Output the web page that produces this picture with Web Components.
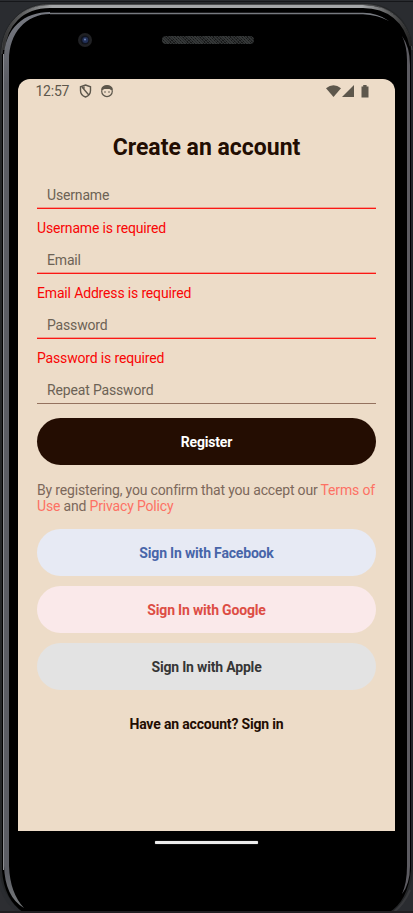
<!DOCTYPE html>
<html lang="en">
<head>
<meta charset="utf-8">
<title>Create an account</title>
<style>
html,body{margin:0;height:100%;overflow:hidden;background:#2a2c30}
body{font-family:Roboto,"Liberation Sans",sans-serif}
</style>
</head>
<body>
<phone-frame>
  <status-bar slot="screen"></status-bar>
  <register-form slot="screen"></register-form>
</phone-frame>
<script>
function define(name, html, setup){
  customElements.define(name, class extends HTMLElement{
    connectedCallback(){
      if(this.shadowRoot) return;
      const root = this.attachShadow({mode:'open'});
      root.innerHTML = html;
      if(setup) setup(this, root);
    }
  });
}

define('phone-frame', `
<style>
:host{display:grid;width:413px;height:913px;overflow:hidden;grid-template:79px 752px 82px / 18px 377px 18px}
svg.case{grid-area:1/1/4/4;width:413px;height:913px;display:block}
.top{grid-area:1/2;display:grid;grid-template-columns:144px 92px 1fr;align-items:center;height:79px}
.camera{width:14px;height:14px;justify-self:start;margin-left:59.5px}
.speaker{height:8px;border-radius:4px;background-color:#262829;background-image:repeating-linear-gradient(45deg,#353838 0 1px,transparent 1px 2px),repeating-linear-gradient(-45deg,#161717 0 1px,transparent 1px 3px)}
.screen{grid-area:2/2;background:#eddcc8;border-radius:12px 12px 0 0;overflow:hidden}
.bottom{grid-area:3/2;display:flex;justify-content:center;align-items:flex-start}
.pill{width:103px;height:3px;border-radius:1px;background:#ededed;margin:10px 1px 0 0;box-shadow:0 0 1px #aaa}
</style>
<svg class="case" viewBox="0 0 413 913">
  <defs>
    <linearGradient id="rim" x1="0" x2="1"><stop offset="0" stop-color="#333"/><stop offset=".12" stop-color="#a4a6a8"/><stop offset=".88" stop-color="#a4a6a8"/><stop offset="1" stop-color="#222"/></linearGradient>
    <linearGradient id="side" x1="0" y1="0" x2="0" y2="1"><stop offset="0" stop-color="#777a82"/><stop offset=".08" stop-color="#5b5d64"/><stop offset=".96" stop-color="#5b5d64"/><stop offset="1" stop-color="#777a7c"/></linearGradient>
  </defs>
  <rect width="413" height="913" fill="#2a2c30"/>
  <rect width="413" height="1" y="1" fill="#16171a"/>
  <path d="M0 913V55C0 25 22 3 50 3H363C395 3 413 25 413 52V865C412 890 405 901 392 913H24Q0 895 0 870Z" fill="#242628"/>
  <path d="M2 870V54C2 27 20 4.500 50 4.500H363C391 4.500 411 23 411 54V870C409 890 402 905 388 913H24Q4 900 2 870Z" fill="#000"/>
  <path d="M2 54C2 27 20 4.500 50 4.500H363C391 4.500 409 23 412 50" fill="none" stroke="#4c4d4f"/>
  <path d="M3.500 50C5 25 22 6.500 50 6.500H363C388 6.500 406 21 411 46" fill="none" stroke="url(#rim)" stroke-width="3"/>
  <path d="M50 12.800H363Q378 13 389 21Q378 15 363 14.200H50Z" fill="#777a80"/>
  <path d="M50 12C24 12 5 28 4 57V866Q5 897 24 908Q10 893 9 866V60C9 33 26 14 50 14Z" fill="url(#side)"/>
  <path d="M3.500 54V870" stroke="#8b8d92" stroke-width="1"/>
  <path d="M402 36Q410 47 410 65V866Q410 884 402 894Q407 883 407 866V60Q407 46 402 36Z" fill="#5c5b61"/>
  <path d="M411.500 55V870" stroke="#25262b"/>
  <path d="M410 890Q404 904 393 913" fill="none" stroke="#38393c" stroke-width="2"/>
  <path d="M0 889Q5 904 18 913H0Z" fill="#2d2e32"/>
  <rect width="413" height="2" y="911" fill="#211e21"/>
</svg>
<div class="top">
  <svg class="camera" viewBox="0 0 14 14"><circle cx="7" cy="7" r="7" fill="#202124"/><circle cx="7" cy="7" r="4.500" fill="#10131d"/><circle cx="7.300" cy="7" r="3" fill="#223057"/><circle cx="7" cy="6.500" r="1" fill="#6c83b4"/></svg>
  <div class="speaker"></div>
</div>
<div class="screen"><slot name="screen"></slot></div>
<div class="bottom"><div class="pill"></div></div>`);

define('status-bar', `
<style>
:host{display:flex;align-items:center;height:24px;padding:0 26px 0 17.5px;box-sizing:border-box;color:#5d574c;font-size:14px;letter-spacing:-.25px;line-height:24px}
time{width:43.5px}
svg{display:block;fill:currentColor}
.gap{flex:1}
</style>
<time>12:57</time>
<svg width="13" height="14" viewBox="0 0 13 14"><path d="M6.500 1L11.500 2.800V6.500C11.500 9.500 9.500 12 6.500 13C3.500 12 1.500 9.500 1.500 6.500V2.800Z" fill="none" stroke="currentColor" stroke-width="1.400"/><path d="M3 3L9.800 11M5 2.500V5.500L8.500 9.500" fill="none" stroke="currentColor" stroke-width="1.300"/></svg>
<svg width="14" height="14" viewBox="0 0 14 14" style="margin-left:8px"><circle cx="7" cy="7.300" r="5.300" fill="none" stroke="currentColor" stroke-width="1.200"/><path d="M1 5.500Q2 1 7 1Q12 1 13 5.500L11 6L9.500 5H4.500L2.500 6Z"/><circle cx="5" cy="8" r=".8"/><circle cx="9" cy="8" r=".8"/></svg>
<span class="gap"></span>
<svg width="15" height="12" viewBox="0 0 15 12"><path d="M0 3.200Q7.500-2.800 15 3.200L7.500 12Z"/></svg>
<svg width="12" height="12" viewBox="0 0 12 12" style="margin-left:1px"><path d="M12 0V12H0Z"/></svg>
<svg width="8" height="13" viewBox="0 0 8 13" style="margin-left:7px"><path d="M2.200 0H5.600V1.500H7.500V12.500H.5V1.500H2.200Z"/></svg>`);

define('text-field', `
<style>
:host{display:block}
.box{box-sizing:border-box;height:31px;border-bottom:1px solid #94725f;padding:0 10px;color:#6c6255;font-size:14px;letter-spacing:-.16px;line-height:35px}
:host([error]) .box{border-bottom-color:#fb1814;box-shadow:0 -1px 0 rgba(255,0,0,.3)}
:host([error]) .box{clip-path:inset(-1px 0 0 0);box-shadow:inset 0 -1px 0 rgba(255,0,0,.3)}
.error{font-size:14px;letter-spacing:-.16px;line-height:16px;height:16px;color:#f90505;margin-top:11px;margin-bottom:1px}
:host(:not([error])) .error{display:none}
</style>
<div class="box"><slot></slot></div><div class="error"></div>`,
(el, root)=>{ root.querySelector('.error').textContent = el.getAttribute('error') || ''; });

define('pill-button', `
<style>
:host{display:block;height:47px;border-radius:23.5px;background:var(--fill);color:var(--ink);text-align:center;font-size:14px;font-weight:700;letter-spacing:-.18px;line-height:48px}
</style><slot></slot>`);

define('register-form', `
<style>
:host{display:flex;flex-direction:column;padding:0 19px}
h1{margin:31px 0 0;height:28px;font-size:23px;line-height:28px;text-align:center;color:#220d02}
.fields{display:flex;flex-direction:column;gap:6px;margin-top:16px}
.primary{margin-top:14px}
p{margin:17px 0 0;font-size:14px;letter-spacing:-.17px;line-height:16px;color:#7c685b;white-space:nowrap}
p span{color:#fd7164}
.social{display:flex;flex-direction:column;gap:10px;margin-top:15px}
.signin{margin-top:26px;text-align:center;font-size:14px;font-weight:700;letter-spacing:-.17px;line-height:16px;color:#220d02}
</style>
<h1>Create an account</h1>
<div class="fields">
<text-field error="Username is required">Username</text-field>
<text-field error="Email Address is required">Email</text-field>
<text-field error="Password is required">Password</text-field>
<text-field>Repeat Password</text-field>
</div>
<pill-button class="primary" style="--fill:#240d02;--ink:#fff">Register</pill-button>
<p>By registering, you confirm that you accept our <span>Terms of<br>Use</span> and <span>Privacy Policy</span></p>
<div class="social">
<pill-button style="--fill:#e7eaf4;--ink:#4765a9">Sign In with Facebook</pill-button>
<pill-button style="--fill:#fae9ea;--ink:#dd4d44">Sign In with Google</pill-button>
<pill-button style="--fill:#e3e3e3;--ink:#363636">Sign In with Apple</pill-button>
</div>
<div class="signin">Have an account? Sign in</div>`);
</script>
</body>
</html>
